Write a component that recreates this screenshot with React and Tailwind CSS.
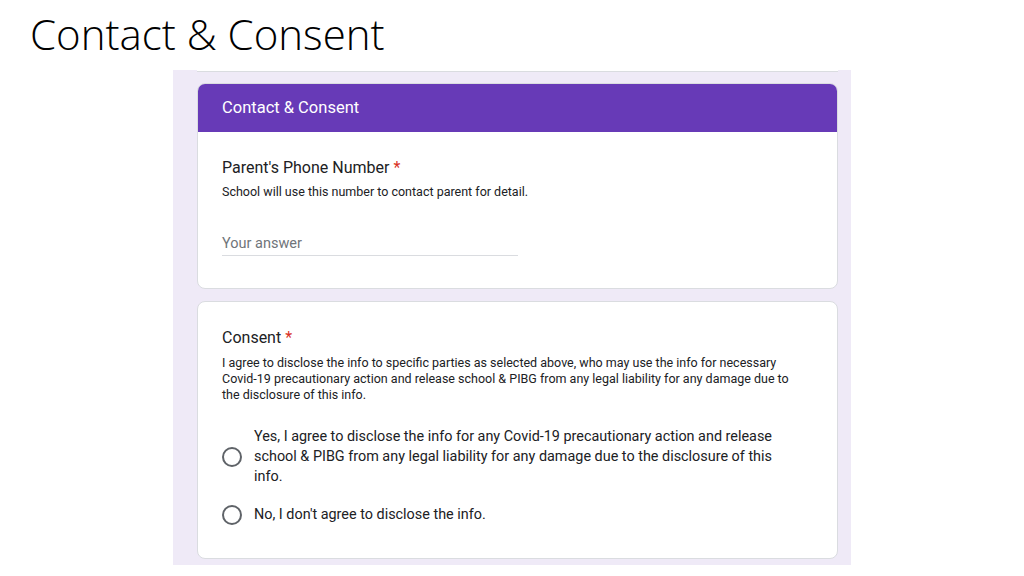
export default function App() {
  return (
    <div className="w-[1024px] h-[576px] bg-white relative overflow-hidden" style={{ fontFamily: "Roboto, 'Liberation Sans', sans-serif" }}>
      <h1 className="pl-[30px] pt-[8px] text-[42px] leading-[52px] font-light text-black" style={{ fontFamily: "'Open Sans', 'Liberation Sans', sans-serif" }}>
        Contact &amp; Consent
      </h1>
      <div className="ml-[173px] mt-[10px] w-[678px] h-[495px] bg-[#efeaf7] overflow-hidden">
        <div className="ml-[24px] mr-[13px] h-[2px] bg-white border-b border-[#dadce0]" />
        <div className="ml-[24px] mr-[13px] mt-[11px] rounded-lg border border-[#dadce0] bg-white overflow-hidden">
          <div className="h-[48px] bg-[#673ab7] px-[24px] flex items-center text-white text-[16.5px]">
            Contact &amp; Consent
          </div>
          <div className="px-[24px] pt-[26px] pb-[32px]">
            <div className="text-[16px] text-[#202124] leading-[20px]">
              Parent's Phone Number <span className="text-[#d93025]">*</span>
            </div>
            <div className="text-[12.5px] text-[#202124] mt-[6px] leading-[16px]">
              School will use this number to contact parent for detail.
            </div>
            <div className="mt-[34px] w-[296px] border-b border-[#dadce0] pb-[1px] text-[14.5px] leading-[20px] text-[#70757a]">
              Your answer
            </div>
          </div>
        </div>
        <div className="ml-[24px] mr-[13px] mt-[12px] rounded-lg border border-[#dadce0] bg-white px-[24px] pt-[26px] pb-[33px]">
          <div className="text-[16px] text-[#202124] leading-[20px]">
            Consent <span className="text-[#d93025]">*</span>
          </div>
          <div className="text-[12.5px] text-[#202124] mt-[7px] leading-[16px] max-w-[584px]">
            I agree to disclose the info to specific parties as selected above, who may use the info for necessary Covid-19 precautionary action and release school &amp; PIBG from any legal liability for any damage due to the disclosure of this info.
          </div>
          <div className="mt-[24px] flex flex-col gap-[18px]">
            <label className="flex items-center gap-[12px]">
              <span className="w-[20px] h-[20px] rounded-full border-2 border-[#5f6368] shrink-0" />
              <span className="text-[14.4px] leading-[20px] text-[#202124] max-w-[540px]">
                Yes, I agree to disclose the info for any Covid-19 precautionary action and release school &amp; PIBG from any legal liability for any damage due to the disclosure of this info.
              </span>
            </label>
            <label className="flex items-center gap-[12px]">
              <span className="w-[20px] h-[20px] rounded-full border-2 border-[#5f6368] shrink-0" />
              <span className="text-[14.4px] leading-[20px] text-[#202124]">
                No, I don't agree to disclose the info.
              </span>
            </label>
          </div>
        </div>
      </div>
    </div>
  );
}
